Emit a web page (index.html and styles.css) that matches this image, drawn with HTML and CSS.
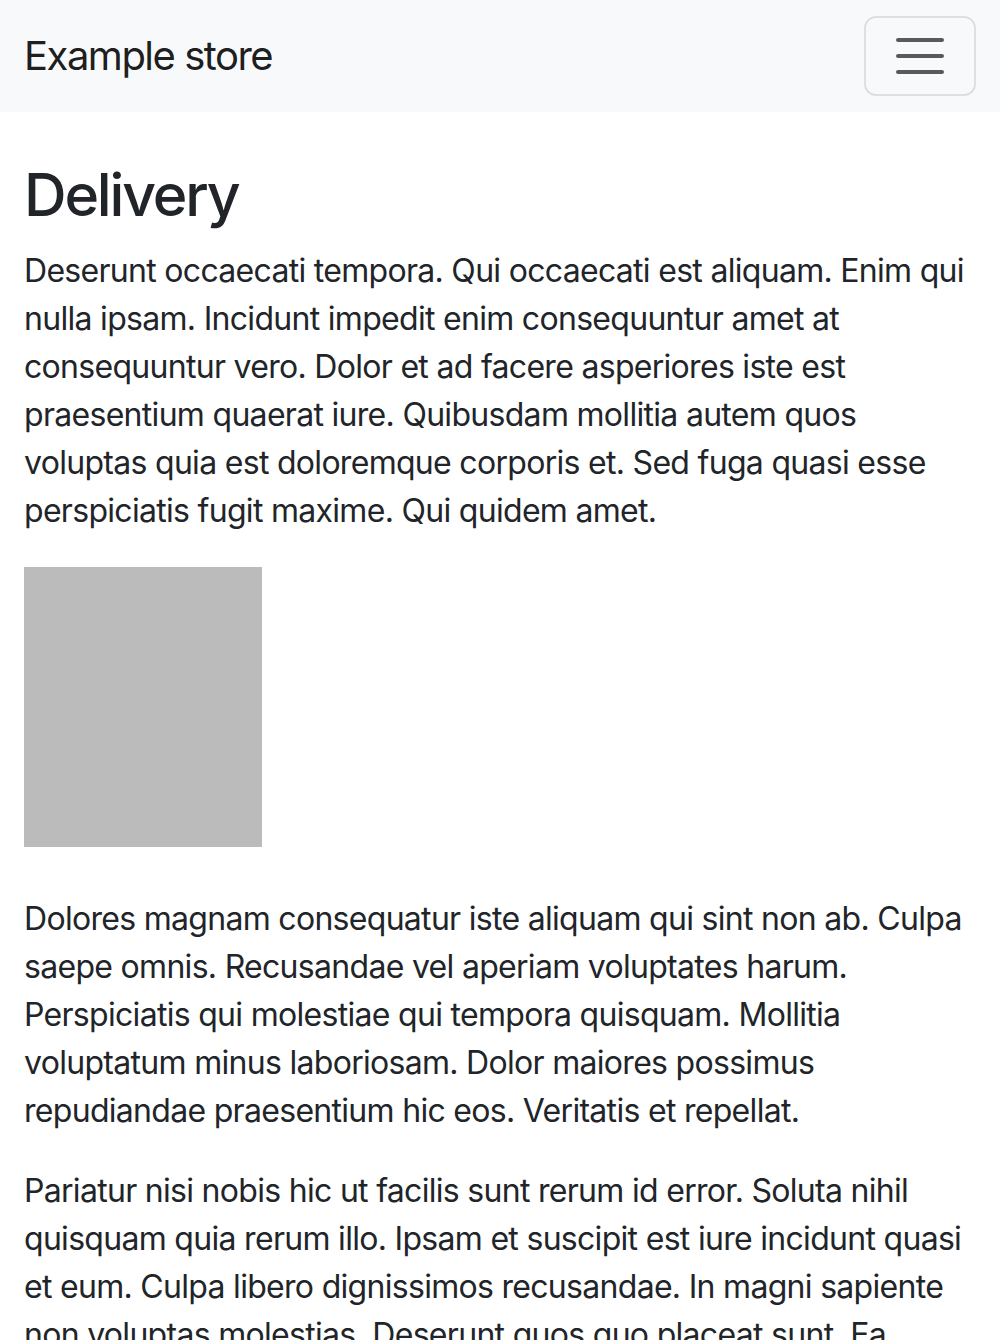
FILE: index.html
```html
<!DOCTYPE html>
<html lang="en">
<head>
<meta charset="utf-8">
<title>Delivery - Example store</title>
<link rel="stylesheet" href="styles.css">
</head>
<body>
<nav class="navbar">
  <div class="nav-inner">
    <a class="brand" href="#">Example store</a>
    <button class="toggler" type="button" aria-label="Toggle navigation">
      <svg class="toggler-icon" viewBox="0 0 30 30" width="60" height="60" aria-hidden="true">
        <path d="M4 7h22M4 15h22M4 23h22" stroke="rgba(33,37,41,0.75)" stroke-width="2" stroke-linecap="round" stroke-miterlimit="10" fill="none"/>
      </svg>
    </button>
  </div>
</nav>
<main class="container">
  <h1 class="title">Delivery</h1>
  <p class="text">Deserunt occaecati tempora. Qui occaecati est aliquam. Enim qui nulla ipsam. Incidunt impedit enim consequuntur amet at consequuntur vero. Dolor et ad facere asperiores iste est praesentium quaerat iure. Quibusdam mollitia autem quos voluptas quia est doloremque corporis et. Sed fuga quasi esse perspiciatis fugit maxime. Qui quidem amet.</p>
  <div class="picture"></div>
  <p class="text">Dolores magnam consequatur iste aliquam qui sint non ab. Culpa saepe omnis. Recusandae vel aperiam voluptates harum. Perspiciatis qui molestiae qui tempora quisquam. Mollitia voluptatum minus laboriosam. Dolor maiores possimus repudiandae praesentium hic eos. Veritatis et repellat.</p>
  <p class="text">Pariatur nisi nobis hic ut facilis sunt rerum id error. Soluta nihil quisquam quia rerum illo. Ipsam et suscipit est iure incidunt quasi et eum. Culpa libero dignissimos recusandae. In magni sapiente non voluptas molestias. Deserunt quos quo placeat sunt. Ea exercitationem voluptatem dolorem sit.</p>
</main>
</body>
</html>
```

FILE: styles.css
```css
* { box-sizing: border-box; }
html, body { margin: 0; padding: 0; }
body {
  font-family: Inter, "Noto Sans", "Liberation Sans", sans-serif;
  font-size: 32px;
  line-height: 1.5;
  color: #212529;
  background: #fff;
}
.navbar {
  background: #f8f9fa;
  padding: 16px 0;
}
.nav-inner {
  display: flex;
  justify-content: space-between;
  align-items: center;
  padding: 0 24px;
}
.brand {
  font-size: 40px;
  line-height: 60px;
  padding: 10px 0;
  color: rgba(0,0,0,0.9);
  text-decoration: none;
  letter-spacing: -1.5px;
}
.toggler {
  display: flex;
  align-items: center;
  justify-content: center;
  padding: 8px 24px;
  background: transparent;
  border: 2px solid rgba(0,0,0,0.1);
  border-radius: 12px;
  height: 80px;
  width: 112px;
}
.toggler-icon { display: block; }
.container {
  padding: 48px 24px 0;
}
.title {
  font-size: 59px;
  font-weight: 500;
  line-height: 1.2;
  margin: 0 0 16px;
  letter-spacing: -2.2px;
}
.text {
  margin: 0 0 32px;
  letter-spacing: -0.7px;
}
.picture {
  width: 238px;
  height: 280px;
  background: #bbbbbb;
  margin-bottom: 48px;
}
```
